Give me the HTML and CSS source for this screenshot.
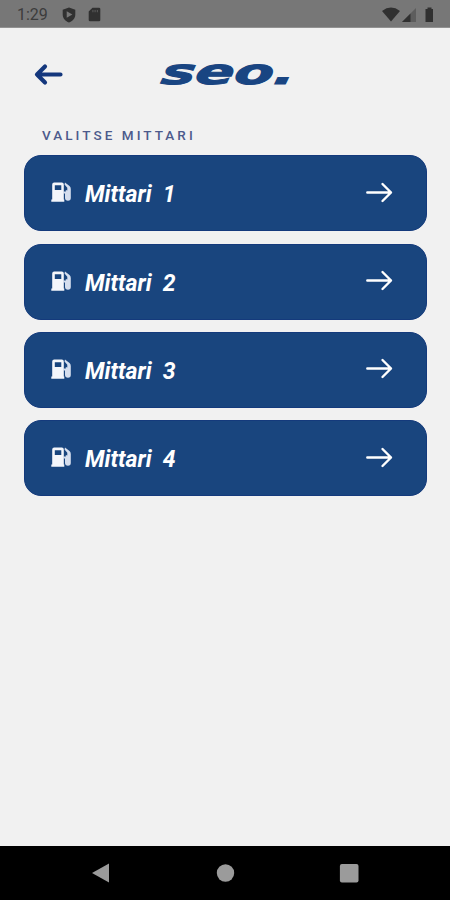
FILE: index.html
```html
<!DOCTYPE html>
<html lang="fi">
<head>
<meta charset="utf-8">
<title>SEO – Valitse mittari</title>
<link rel="stylesheet" href="styles.css">
</head>
<body>
<svg class="defs" aria-hidden="true">
  <symbol id="pump" viewBox="0 0 21 21">
    <path fill="#f4f6fb" fill-rule="evenodd" d="M1.2 2.5Q1.2.5 3.2.5H10.8Q12.8.5 12.8 2.5V17.5H13.3V19.8H.3V17.5H1.2ZM3.8 3.2V8H10.3V3.2Z"/>
    <path fill="#d5deee" d="M14 .5L18.5 4Q19.8 5.2 19.8 7V16Q19.8 18.8 17 18.8T14 16V11.5H12V9.5H14.8V8L16.3 8.6V5.8L13.5 2.6Z"/>
  </symbol>
  <symbol id="arrow" viewBox="0 0 28 22">
    <path d="M2.3 10.5H26M17.5 2L26 10.5L17.5 19" fill="none" stroke="#fff" stroke-width="2.4" stroke-linecap="round" stroke-linejoin="round"/>
  </symbol>
</svg>
<div class="screen">
  <div class="status">
    <span class="time">1:29</span>
    <svg class="shield" width="14" height="16" viewBox="0 0 14 16"><path fill="#303030" fill-rule="evenodd" d="M7 .5L13.3 2.8V7.5C13.3 11.5 10.5 14.3 7 15.6C3.5 14.3.7 11.5.7 7.5V2.8ZM4.7 4.3V10.8L10.4 7.5Z"/></svg>
    <svg class="card" width="13" height="15" viewBox="0 0 13 15"><path fill="#303030" d="M4.5.7H11Q12.3.7 12.3 2V13Q12.3 14.3 11 14.3H2Q.7 14.3.7 13V4.5Z"/><path fill="#555" d="M4.3 3V5.3H5.5V3ZM6.5 3V5.3H7.7V3ZM8.8 3V5.3H10V3Z"/></svg>
    <svg class="signals" width="52" height="16" viewBox="0 0 52 16">
      <path fill="#303030" d="M0 4Q9-2.8 18 4L9 14.5Z"/>
      <path fill="#5d5d5d" d="M34 1V15H20Z"/><path fill="#303030" d="M28.5 6.5V15H20Z"/>
      <path fill="#303030" d="M43.5 2H45.5V.5H49.5V2H51V15H43.5V2Z"/>
    </svg>
  </div>
  <header class="header">
    <svg class="back" width="30" height="24" viewBox="0 0 30 24"><path d="M26.5 11.5H3M11 3.5L3 11.5L11 19.5" fill="none" stroke="#14377d" stroke-width="4.2" stroke-linecap="round" stroke-linejoin="round"/></svg>
    <svg class="logo" width="134" height="30" viewBox="0 0 134 30"><text transform="translate(0 24) skewX(-9)" x="0" y="0" textLength="134" lengthAdjust="spacingAndGlyphs">seo.</text></svg>
  </header>
  <h1 class="title">VALITSE MITTARI</h1>
  <main class="meters">
    <a class="meter"><svg class="pump"><use href="#pump"/></svg><span>Mittari&nbsp; 1</span><svg class="arrow"><use href="#arrow"/></svg></a>
    <a class="meter"><svg class="pump"><use href="#pump"/></svg><span>Mittari&nbsp; 2</span><svg class="arrow"><use href="#arrow"/></svg></a>
    <a class="meter"><svg class="pump"><use href="#pump"/></svg><span>Mittari&nbsp; 3</span><svg class="arrow"><use href="#arrow"/></svg></a>
    <a class="meter"><svg class="pump"><use href="#pump"/></svg><span>Mittari&nbsp; 4</span><svg class="arrow"><use href="#arrow"/></svg></a>
  </main>
  <nav class="nav">
    <svg width="20" height="22" viewBox="0 0 20 22"><path fill="#9b9b9b" d="M1 11L18 1.5V20.5Z"/></svg>
    <svg width="20" height="20" viewBox="0 0 20 20"><circle cx="10.5" cy="10" r="8.7" fill="#9b9b9b"/></svg>
    <svg width="20" height="20" viewBox="0 0 20 20"><rect x=".9" y=".9" width="18.6" height="18.6" rx="2" fill="#9b9b9b"/></svg>
  </nav>
</div>
</body>
</html>
```
FILE: styles.css
```css
* { box-sizing: border-box; }
body { margin: 0; background: #f1f1f1; font-family: Roboto, "Liberation Sans", sans-serif; }
svg { display: block; flex: none; }
.defs { position: absolute; width: 0; height: 0; }
.screen { width: 450px; height: 900px; display: flex; flex-direction: column; overflow: hidden; }
.status {
  height: 28px; flex: none; display: flex; align-items: center;
  padding: 2px 16px 0 17px; background: #777; border-bottom: 1px solid #929292;
}
.time { width: 45px; font-size: 16px; line-height: 20px; color: #3c3c3c; }
.card { margin-left: 12px; }
.signals { margin-left: auto; }
.header { height: 93px; flex: none; display: flex; align-items: center; padding-left: 34px; }
.logo { margin-left: 96px; overflow: visible; }
.logo text { font: italic 700 35px "DejaVu Sans", sans-serif; fill: #194582; stroke: #194582; stroke-width: 1px; }
.title {
  flex: none; margin: 6px 0 0 42px; height: 16px; line-height: 17px;
  font-size: 13.5px; font-weight: 500; letter-spacing: 3.05px; color: #4c5a8c;
}
.meters { display: grid; grid-auto-rows: 76px; row-gap: 12.4px; margin: 12.2px 23px 0 24px; }
.meter {
  display: flex; align-items: center; padding: 0 33px 0 26px;
  border-radius: 17px; background: #19457e; border: 1px solid #143a7c;
  font-size: 23px; font-weight: 700; font-style: italic; color: #fff;
}
.meter span { margin: 4px 0 0 13.5px; line-height: 28px; }
.pump { width: 21px; height: 21px; margin: -1px 0 0 -.5px; }
.arrow { width: 28px; height: 22px; margin: 0 0 1px auto; }
.nav {
  height: 54px; flex: none; margin-top: auto; background: #000;
  display: flex; align-items: center; justify-content: space-between; padding: 0 91px;
}
```
